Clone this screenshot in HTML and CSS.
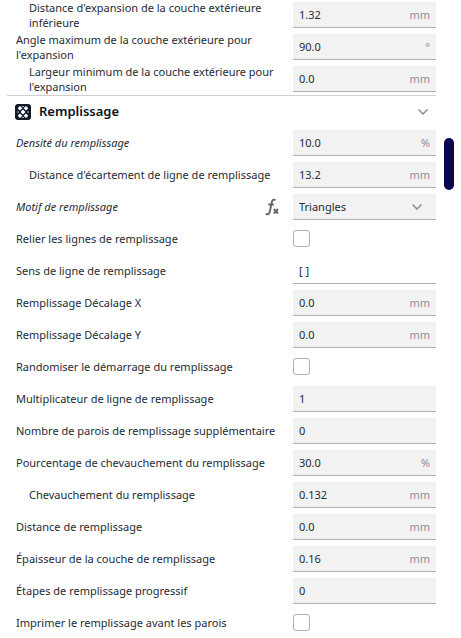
FILE: index.html
```html
<!DOCTYPE html>
<html lang="fr">
<head>
<meta charset="utf-8">
<title>Remplissage</title>
<link rel="stylesheet" href="styles.css">
</head>
<body>
<div class="panel">
  <form class="settings">
    <div class="group group-shell">
      <div class="row child"><label for="s1">Distance d'expansion de la couche extérieure inférieure</label><div class="field"><input id="s1" type="text" value="1.32"><span class="unit">mm</span></div></div>
      <div class="row"><label for="s2">Angle maximum de la couche extérieure pour l'expansion</label><div class="field"><input id="s2" type="text" value="90.0"><span class="unit">°</span></div></div>
      <div class="row child"><label for="s3">Largeur minimum de la couche extérieure pour l'expansion</label><div class="field"><input id="s3" type="text" value="0.0"><span class="unit">mm</span></div></div>
    </div>
    <button class="category" type="button">
      <svg class="category-icon" viewBox="0 0 16 16" aria-hidden="true">
        <rect width="16" height="16" rx="3" fill="#0e1a26"/>
        <path d="M5 2l2.300 2.300L5 6.600 2.700 4.300zM11 2l2.300 2.300L11 6.600 8.700 4.300zM8 5.500L10.500 8 8 10.500 5.500 8zM5 9.400l2.300 2.300L5 14l-2.300-2.300zM11 9.400l2.300 2.300L11 14l-2.300-2.300z" fill="#fff"/>
        <path d="M2.500 6.500v3L4 8zM13.500 6.500v3L12 8zM6.500 2h3L8 3.500zM6.500 14h3L8 12.500z" fill="#b9bec3"/>
      </svg>
      <span class="category-title">Remplissage</span>
      <svg class="chevron" viewBox="0 0 10 6" aria-hidden="true"><path d="M.5.5L5 5 9.500.5"/></svg>
    </button>
    <div class="group group-infill">
      <div class="row"><label class="linked" for="s4">Densité du remplissage</label><div class="field"><input id="s4" type="text" value="10.0"><span class="unit">%</span></div></div>
      <div class="row child"><label for="s5">Distance d'écartement de ligne de remplissage</label><div class="field"><input id="s5" type="text" value="13.2"><span class="unit">mm</span></div></div>
      <div class="row">
        <label class="linked" for="s6">Motif de remplissage</label>
        <button class="formula" type="button" aria-label="Formule">
          <svg viewBox="0 0 14 18" aria-hidden="true"><path d="M10.500 2.200C8.500.8 7.200 2 6.700 4.500L4.900 13.200C4.400 15.800 3 17 .8 15.900M3.300 6.500h5.500" stroke-width="1.900"/><path d="M8.800 11l4.200 4.500M13 11l-4.200 4.500" stroke-width="2"/></svg>
        </button>
        <div class="field"><select id="s6"><option>Triangles</option></select><svg class="chevron" viewBox="0 0 10 6" aria-hidden="true"><path d="M.5.5L5 5 9.500.5"/></svg></div>
      </div>
      <div class="row"><label for="s7">Relier les lignes de remplissage</label><div class="check"><input id="s7" type="checkbox"></div></div>
      <div class="row"><label for="s8">Sens de ligne de remplissage</label><div class="field plain"><input id="s8" type="text" value="[ ]"></div></div>
      <div class="row"><label for="s9">Remplissage Décalage X</label><div class="field"><input id="s9" type="text" value="0.0"><span class="unit">mm</span></div></div>
      <div class="row"><label for="s10">Remplissage Décalage Y</label><div class="field"><input id="s10" type="text" value="0.0"><span class="unit">mm</span></div></div>
      <div class="row"><label for="s11">Randomiser le démarrage du remplissage</label><div class="check"><input id="s11" type="checkbox"></div></div>
      <div class="row"><label for="s12">Multiplicateur de ligne de remplissage</label><div class="field"><input id="s12" type="text" value="1"></div></div>
      <div class="row"><label for="s13">Nombre de parois de remplissage supplémentaire</label><div class="field"><input id="s13" type="text" value="0"></div></div>
      <div class="row"><label for="s14">Pourcentage de chevauchement du remplissage</label><div class="field"><input id="s14" type="text" value="30.0"><span class="unit">%</span></div></div>
      <div class="row child"><label for="s15">Chevauchement du remplissage</label><div class="field"><input id="s15" type="text" value="0.132"><span class="unit">mm</span></div></div>
      <div class="row"><label for="s16">Distance de remplissage</label><div class="field"><input id="s16" type="text" value="0.0"><span class="unit">mm</span></div></div>
      <div class="row"><label for="s17">Épaisseur de la couche de remplissage</label><div class="field"><input id="s17" type="text" value="0.16"><span class="unit">mm</span></div></div>
      <div class="row"><label for="s18">Étapes de remplissage progressif</label><div class="field"><input id="s18" type="text" value="0"></div></div>
      <div class="row"><label for="s19">Imprimer le remplissage avant les parois</label><div class="check"><input id="s19" type="checkbox"></div></div>
    </div>
  </form>
  <div class="scroll-track"><div class="scroll-handle"></div></div>
</div>
</body>
</html>
```
FILE: styles.css
```css
* {
  box-sizing: border-box;
}

body {
  margin: 0;
  background: #fff;
  color: #252b33;
  font: 11px/15px "Noto Sans", sans-serif;
}

button,
input,
select {
  margin: 0;
  padding: 0;
  border: 0;
  background: none;
  color: inherit;
  font: inherit;
}

.panel {
  display: flex;
  gap: 8px;
  padding: 2px 7px 0;
}

.settings {
  flex: 1;
  min-width: 0;
}

.group {
  display: grid;
  gap: 6px;
  padding-left: 9px;
}

.group-shell {
  padding-bottom: 3px;
}

.group-infill {
  padding-top: 3px;
}

.row {
  display: flex;
  align-items: center;
  height: 26px;
}

.child {
  padding-left: 13px;
}

label {
  flex: 1;
  padding: 0 8px 1px 0;
}

.linked {
  font-style: italic;
}

.field,
.check {
  flex: none;
  display: flex;
  align-items: center;
  width: 143px;
  height: 26px;
}

.field {
  padding: 0 6px;
  background: #f2f2f2;
  border-bottom: 1px solid #b0b0b0;
}

.plain {
  background: #fff;
}

.field input,
.field select {
  flex: 1;
  min-width: 0;
  height: 25px;
  appearance: none;
}

.unit {
  color: #8f8f8f;
}

.chevron {
  width: 10px;
  height: 6px;
  fill: none;
  stroke: #8c8c8c;
  stroke-width: 1.5;
}

.field .chevron {
  margin-right: 8px;
}

.check {
  padding-bottom: 1px;
}

.check input {
  width: 17px;
  height: 17px;
  appearance: none;
  background: #fff;
  border: 1px solid #b0b0b0;
  border-radius: 3px;
}

.category {
  display: flex;
  align-items: center;
  gap: 8px;
  width: 100%;
  height: 32px;
  padding: 0 8px;
  border-top: 1px solid #cfcfcf;
  text-align: left;
}

.category-icon {
  width: 16px;
  height: 16px;
}

.category-title {
  flex: 1;
  color: #0b1320;
  font-size: 13px;
  font-weight: 600;
}

.formula {
  width: 14px;
  height: 18px;
  margin-right: 14px;
}

.formula svg {
  display: block;
  fill: none;
  stroke: #666;
}

.scroll-track {
  flex: none;
  width: 10px;
  padding-top: 136px;
}

.scroll-handle {
  height: 52px;
  border-radius: 5px;
  background: #08074f;
}
```
